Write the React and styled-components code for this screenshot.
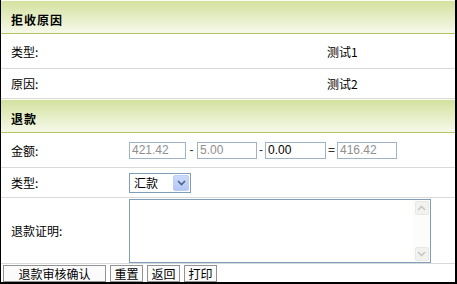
import React from 'react';
import styled, { createGlobalStyle } from 'styled-components';

const GlobalStyle = createGlobalStyle`
  body {
    margin: 0;
    background: #fff;
    font-family: "Noto Sans CJK SC", sans-serif;
  }
`;

const Frame = styled.div`
  width: 457px;
  height: 284px;
  box-sizing: border-box;
  border-left: 1px solid #000;
  border-right: 2px solid #000;
  border-bottom: 2px solid #000;
  background: #fff;
  display: flex;
  flex-direction: column;
  font: 12px "Noto Sans CJK SC", sans-serif;
  color: #000;
  overflow: hidden;
`;

const SectionHeader = styled.div`
  height: 34px;
  flex: none;
  box-sizing: border-box;
  border-top: 1px solid #fbfdf2;
  border-bottom: 1px solid #b6c35e;
  background: linear-gradient(#d3e19f, #f6f9ea);
  display: flex;
  align-items: center;
  padding: 4px 0 0 10px;
  font-weight: bold;
  letter-spacing: 1px;
`;

const Row = styled.div`
  height: ${(p) => p.$h}px;
  flex: none;
  box-sizing: border-box;
  border-bottom: 1px solid #d9d9d9;
  display: grid;
  grid-template-columns: ${(p) => p.$label}px 1fr;
  align-items: center;
`;

const Label = styled.div`
  padding-left: 10px;
`;

const Value = styled.div`
  padding-left: ${(p) => p.$pad || 0}px;
  display: flex;
  align-items: center;
`;

const Amount = styled.input`
  width: ${(p) => p.$w}px;
  height: 17px;
  box-sizing: border-box;
  border: 1px solid #9fb2c8;
  padding: 0 2px;
  margin: 0;
  font: 12px "Liberation Sans", Arial, sans-serif;
  color: ${(p) => (p.readOnly ? '#8f8f8f' : '#000')};
  background: #fff;
  outline: none;
`;

const Sep = styled.span`
  width: ${(p) => p.$w}px;
  text-align: center;
  font: 12px "Liberation Sans", Arial, sans-serif;
  color: #333;
`;

const SelectBox = styled.div`
  width: 62px;
  height: 20px;
  box-sizing: border-box;
  border: 1px solid #7f9db9;
  display: flex;
  align-items: center;
  justify-content: space-between;
  padding: 0 1px 0 4px;
  background: #fff;
`;

const ArrowButton = styled.span`
  width: 16px;
  height: 16px;
  box-sizing: border-box;
  border: 1px solid #b9cdf7;
  border-radius: 2px;
  background: linear-gradient(#cbdafc, #b4c8f6);
  display: flex;
  align-items: center;
  justify-content: center;
`;

const TextBox = styled.div`
  width: 302px;
  height: 64px;
  margin-top: 1px;
  box-sizing: border-box;
  border: 1px solid #7f9db9;
  display: flex;
  background: #fff;
`;

const Area = styled.textarea`
  flex: 1;
  border: none;
  resize: none;
  outline: none;
  margin: 0;
  padding: 2px;
  font: 12px "Noto Sans CJK SC", sans-serif;
`;

const ScrollTrack = styled.div`
  width: 17px;
  display: flex;
  flex-direction: column;
  justify-content: space-between;
  align-items: center;
  padding: 1px 0;
  background: #fcfcfb;
`;

const ScrollButton = styled.span`
  width: 14px;
  height: 14px;
  box-sizing: border-box;
  border: 1px solid #e9e9e4;
  border-radius: 2px;
  background: #f2f2ee;
  display: flex;
  align-items: center;
  justify-content: center;
`;

const ButtonBar = styled.div`
  flex: 1;
  display: flex;
  align-items: flex-start;
  gap: 4px;
  padding: 1px 0 0 2px;
`;

const Button = styled.button`
  width: ${(p) => p.$w}px;
  height: 17px;
  box-sizing: border-box;
  border: 1px solid #939393;
  background: #fbfbfb;
  padding: 0;
  margin: 0;
  font: 12px "Noto Sans CJK SC", sans-serif;
  line-height: 15px;
  color: #000;
`;

const Chevron = ({ up, color }) => (
  <svg width="9" height="6" viewBox="0 0 9 6">
    <path
      d={up ? 'M1 5 L4.5 1.5 L8 5' : 'M1 1 L4.5 4.5 L8 1'}
      fill="none"
      stroke={color}
      strokeWidth="1.6"
    />
  </svg>
);

export default function App() {
  return (
    <>
      <GlobalStyle />
      <Frame>
        <SectionHeader>拒收原因</SectionHeader>
        <Row $h={35} $label={315}>
          <Label>类型:</Label>
          <Value $pad={11}>测试1</Value>
        </Row>
        <Row $h={30} $label={315}>
          <Label>原因:</Label>
          <Value $pad={11}>测试2</Value>
        </Row>

        <SectionHeader>退款</SectionHeader>
        <Row $h={35} $label={128}>
          <Label>金额:</Label>
          <Value>
            <Amount $w={57} readOnly value="421.42" />
            <Sep $w={11}>-</Sep>
            <Amount $w={60} readOnly value="5.00" />
            <Sep $w={8}>-</Sep>
            <Amount $w={61} defaultValue="0.00" />
            <Sep $w={11}>=</Sep>
            <Amount $w={60} readOnly value="416.42" />
          </Value>
        </Row>
        <Row $h={30} $label={128}>
          <Label>类型:</Label>
          <Value>
            <SelectBox>
              <span>汇款</span>
              <ArrowButton>
                <Chevron color="#4d6185" />
              </ArrowButton>
            </SelectBox>
          </Value>
        </Row>
        <Row $h={66} $label={128}>
          <Label>退款证明:</Label>
          <Value>
            <TextBox>
              <Area />
              <ScrollTrack>
                <ScrollButton>
                  <Chevron up color="#c9c9c4" />
                </ScrollButton>
                <ScrollButton>
                  <Chevron color="#c9c9c4" />
                </ScrollButton>
              </ScrollTrack>
            </TextBox>
          </Value>
        </Row>

        <ButtonBar>
          <Button $w={103}>退款审核确认</Button>
          <Button $w={33}>重置</Button>
          <Button $w={33}>返回</Button>
          <Button $w={33}>打印</Button>
        </ButtonBar>
      </Frame>
    </>
  );
}
